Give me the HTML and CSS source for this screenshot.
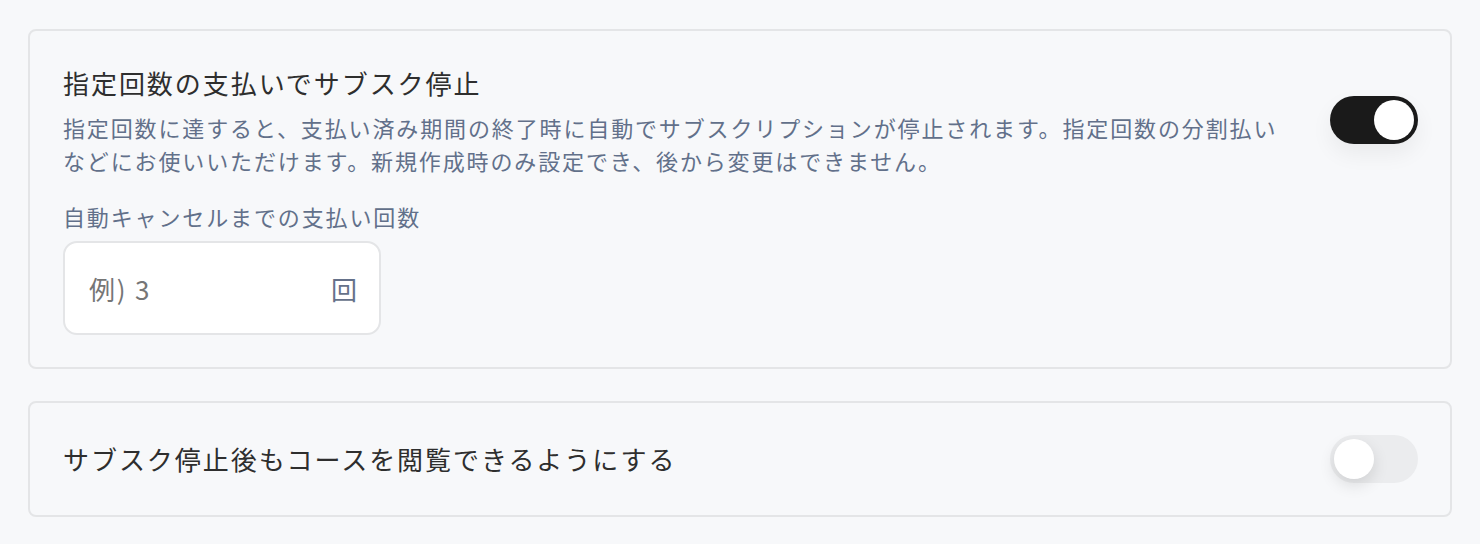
FILE: index.html
```html
<!DOCTYPE html>
<html lang="ja">
<head>
	<meta charset="UTF-8">
	<meta name=viewport content="width=device-width,initial-scale=1">
	<title>サブスク設定</title>

	<link rel="stylesheet" href="styles.css">
</head>
<body>

	<div class="settings">

		<section class="card">
			<div class="card-head">
				<div class="card-text">
					<h2 class="card-title">指定回数の支払いでサブスク停止</h2>
					<p class="card-desc">指定回数に達すると、支払い済み期間の終了時に自動でサブスクリプションが停止されます。指定回数の分割払いなどにお使いいただけます。新規作成時のみ設定でき、後から変更はできません。</p>
				</div>
				<span class="switch on"><span class="knob"></span></span>
			</div>

			<label class="field-label" for="cancel-count">自動キャンセルまでの支払い回数</label>
			<div class="field">
				<input id="cancel-count" type="text" placeholder="例) 3">
				<span class="suffix">回</span>
			</div>
		</section>

		<section class="card">
			<div class="card-head">
				<h2 class="card-title">サブスク停止後もコースを閲覧できるようにする</h2>
				<span class="switch"><span class="knob"></span></span>
			</div>
		</section>

	</div>

</body>
</html>
```

FILE: styles.css
```css
body {
	margin: 0;
	background: #f7f8fa;
	font-family: "Noto Sans CJK JP", "Noto Sans", sans-serif;
	color: #2e2e2e;
}

.settings {
	padding: 29px 28px 28px;
	display: flex;
	flex-direction: column;
	gap: 32px;
}

.card {
	border: 2px solid #e4e5e7;
	border-radius: 8px;
	background: #f7f8fa;
	padding: 32px 32px 32px 33px;
	display: flex;
	flex-direction: column;
	align-items: flex-start;
}

.card-head {
	align-self: stretch;
	display: flex;
	align-items: center;
	justify-content: space-between;
	gap: 40px;
}

.card-text {
	flex: 1;
}

.card-title {
	margin: 0;
	font-size: 26px;
	font-weight: 400;
	line-height: 40px;
	letter-spacing: .075em;
	color: #2e2e2e;
}

.card-desc {
	margin: 8px 0 0;
	font-size: 22px;
	line-height: 33px;
	letter-spacing: .085em;
	color: #62708a;
}

/* toggle switch */
.switch {
	flex: none;
	position: relative;
	width: 88px;
	height: 48px;
	border-radius: 24px;
	background: #ebecee;
}

.switch .knob {
	position: absolute;
	top: 4px;
	left: 4px;
	width: 40px;
	height: 40px;
	border-radius: 50%;
	background: #ffffff;
	box-shadow: 0 6px 16px rgba(0, 0, 0, .12);
}

.switch.on {
	background: #1a1a1a;
	box-shadow: 0 10px 22px rgba(0, 0, 0, .06);
}

.switch.on .knob {
	left: 44px;
	box-shadow: none;
}

.field-label {
	margin-top: 23px;
	font-size: 22px;
	line-height: 33px;
	letter-spacing: .085em;
	color: #62708a;
}

.field {
	margin-top: 8px;
	width: 318px;
	height: 94px;
	box-sizing: border-box;
	border: 2px solid #e4e5e7;
	border-radius: 14px;
	background: #ffffff;
	display: flex;
	align-items: center;
	padding: 0 22px 0 24px;
}

.field input {
	flex: 1;
	min-width: 0;
	border: none;
	outline: none;
	background: transparent;
	padding: 0;
	font-family: inherit;
	font-size: 26px;
	letter-spacing: .07em;
	color: #2e2e2e;
}

.field input::placeholder {
	color: #767676;
}

.suffix {
	font-size: 26px;
	color: #65718a;
}
```
